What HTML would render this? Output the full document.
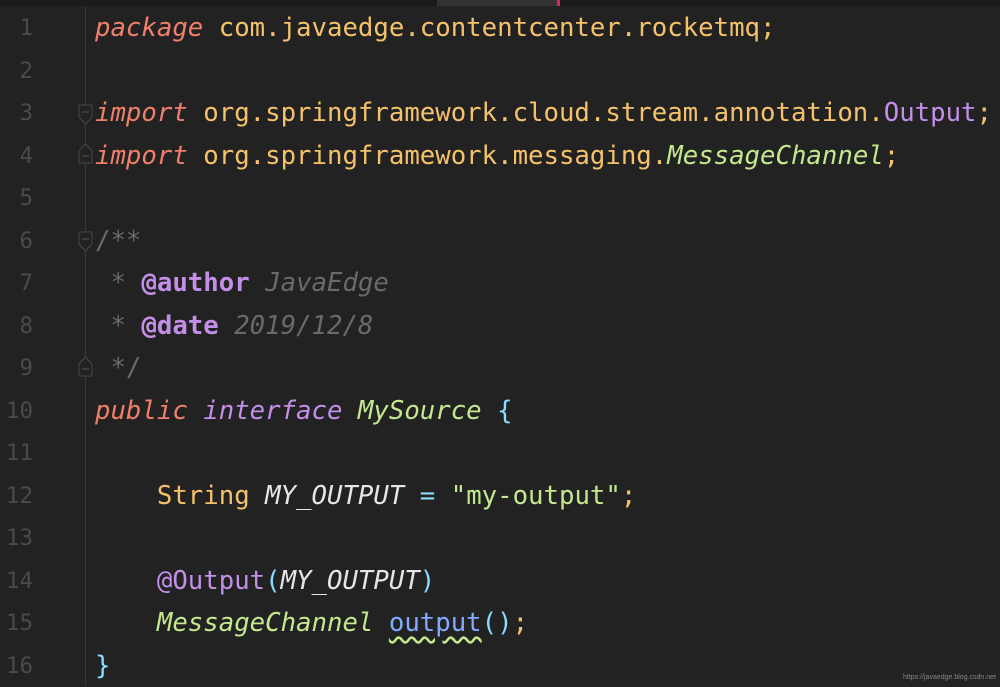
<!DOCTYPE html><html><head><meta charset="utf-8"><style>
body{margin:0;width:1000px;height:686px;background:#222222;overflow:hidden;position:relative;font-family:"DejaVu Sans Mono","Liberation Mono",monospace;font-size:25.7px}
.top{position:absolute;left:0;top:0;width:1000px;height:6px;background:#1b1b1b}
.top i{position:absolute;left:437px;top:0;width:120px;height:6px;background:#333}
.top b{position:absolute;left:557px;top:0;width:3px;height:6px;background:#e0245e}
.gut{position:absolute;left:85px;top:6px;width:1px;height:680px;background:#383838}
.l{position:absolute;left:0;height:42.5px;line-height:42.5px;white-space:pre;width:1000px}
.n{position:absolute;left:0;width:33px;text-align:right;color:#4a4a4a;font-size:22.5px}
.c{position:absolute;left:95px}
.k{color:#f07f6a;font-style:italic}.y{color:#f5c26b}.p{color:#c38fe9}.g{color:#c3e88d}.gi{color:#c3e88d;font-style:italic}
.cm{color:#6a6a6a}.ci{color:#6a6a6a;font-style:italic}.t{color:#c38fe9;font-weight:bold}.cy{color:#89ddff}.w{color:#e6e6e6;font-style:italic}.b{color:#82aaff}
.u{text-decoration:underline wavy #c3e88d;text-underline-offset:5px}
.f{position:absolute;left:78px}
.wm{position:absolute;right:4px;bottom:5px;font-family:"Liberation Sans",sans-serif;font-size:7px;color:#888}
</style></head><body>
<div class="top"><i></i><b></b></div>
<div class="gut"></div>
<svg class="f" style="top:104px" width="16" height="22"><path d="M1 1H14V13L7.5 20L1 13Z" fill="#222" stroke="#474747"/><path d="M4 8H11" stroke="#555"/></svg>
<svg class="f" style="top:142px" width="16" height="22"><path d="M1 21H14V9L7.5 2L1 9Z" fill="#222" stroke="#474747"/><path d="M4 14H11" stroke="#555"/></svg>
<svg class="f" style="top:231px" width="16" height="22"><path d="M1 1H14V13L7.5 20L1 13Z" fill="#222" stroke="#474747"/><path d="M4 8H11" stroke="#555"/></svg>
<svg class="f" style="top:355px" width="16" height="22"><path d="M1 21H14V9L7.5 2L1 9Z" fill="#222" stroke="#474747"/><path d="M4 14H11" stroke="#555"/></svg>
<div class="l" style="top:7px"><span class="n">1</span><span class="c"><span class="k">package</span> <span class="y">com.javaedge.contentcenter.rocketmq;</span></span></div>
<div class="l" style="top:49.5px"><span class="n">2</span></div>
<div class="l" style="top:92px"><span class="n">3</span><span class="c"><span class="k">import</span> <span class="y">org.springframework.cloud.stream.annotation.</span><span class="p">Output</span><span class="y">;</span></span></div>
<div class="l" style="top:134.5px"><span class="n">4</span><span class="c"><span class="k">import</span> <span class="y">org.springframework.messaging.</span><span class="gi">MessageChannel</span><span class="y">;</span></span></div>
<div class="l" style="top:177px"><span class="n">5</span></div>
<div class="l" style="top:219.5px"><span class="n">6</span><span class="c"><span class="cm">/**</span></span></div>
<div class="l" style="top:262px"><span class="n">7</span><span class="c"><span class="cm"> * </span><span class="t">@author</span> <span class="ci">JavaEdge</span></span></div>
<div class="l" style="top:304.5px"><span class="n">8</span><span class="c"><span class="cm"> * </span><span class="t">@date</span> <span class="ci">2019/12/8</span></span></div>
<div class="l" style="top:347px"><span class="n">9</span><span class="c"><span class="cm"> */</span></span></div>
<div class="l" style="top:389.5px"><span class="n">10</span><span class="c"><span class="k">public</span> <span class="p" style="font-style:italic">interface</span> <span class="gi">MySource</span> <span class="cy">{</span></span></div>
<div class="l" style="top:432px"><span class="n">11</span></div>
<div class="l" style="top:474.5px"><span class="n">12</span><span class="c">    <span class="y">String</span> <span class="w">MY_OUTPUT</span> <span class="cy">=</span> <span class="g">"my-output"</span><span class="y">;</span></span></div>
<div class="l" style="top:517px"><span class="n">13</span></div>
<div class="l" style="top:559.5px"><span class="n">14</span><span class="c">    <span class="p">@Output</span><span class="cy">(</span><span class="w">MY_OUTPUT</span><span class="cy">)</span></span></div>
<div class="l" style="top:602px"><span class="n">15</span><span class="c">    <span class="gi">MessageChannel</span> <span class="b u">output</span><span class="cy">()</span><span class="y">;</span></span></div>
<div class="l" style="top:644.5px"><span class="n">16</span><span class="c"><span class="cy">}</span></span></div>
<div class="wm">https://javaedge.blog.csdn.net</div>
</body></html>
